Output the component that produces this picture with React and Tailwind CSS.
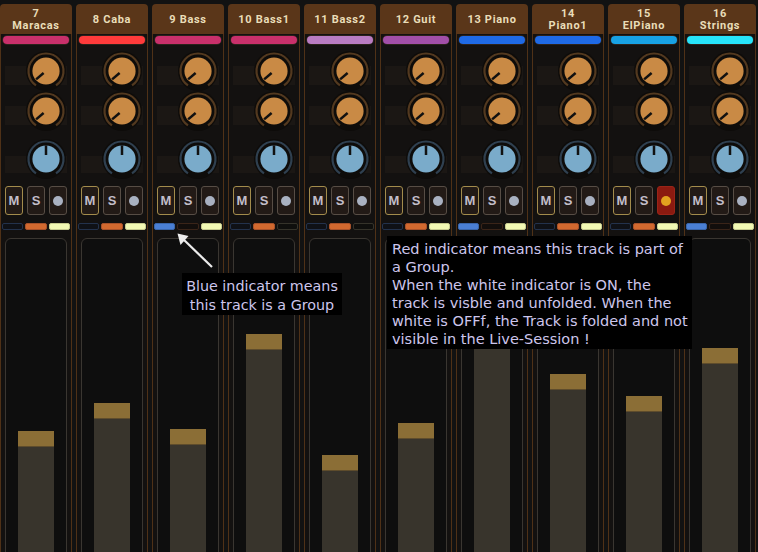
import React from "react";

const strips = [
  { n: "7", name: "Maracas", color: "#c9306b", ind: [0, 1, 1], cap: 431 },
  { n: "8", name: "Caba", color: "#ff3b3b", ind: [0, 1, 1], cap: 403, one: true },
  { n: "9", name: "Bass", color: "#c9306b", ind: [1, 0, 1], cap: 429, one: true },
  { n: "10", name: "Bass1", color: "#c9306b", ind: [0, 1, 0], cap: 334, one: true },
  { n: "11", name: "Bass2", color: "#b97cc2", ind: [0, 1, 0], cap: 455, one: true },
  { n: "12", name: "Guit", color: "#a24fa8", ind: [0, 1, 1], cap: 423, one: true },
  { n: "13", name: "Piano", color: "#1f6ae6", ind: [1, 0, 1], cap: 330, one: true },
  { n: "14", name: "Piano1", color: "#1f6ae6", ind: [0, 1, 1], cap: 374 },
  { n: "15", name: "ElPiano", color: "#18a2e4", ind: [0, 1, 1], cap: 396, rec: true },
  { n: "16", name: "Strings", color: "#27e4fa", ind: [1, 0, 1], cap: 348 },
];

function Knob({ blue }) {
  const fill = blue ? "#7aabca" : "#c98a45";
  const ring = blue ? "#2f4050" : "#53391f";
  return (
    <svg width="40" height="40" viewBox="0 0 40 40" className="col-start-1 row-start-1 justify-self-start ml-[25px] self-start">
      <circle cx="20" cy="20" r="20" fill="#0e0c0a" />
      <path d="M 9.96 34.33 A 17.5 17.5 0 1 1 30.04 34.33" fill="none" stroke={ring} strokeWidth="2.2" />
      <circle cx="20" cy="20" r="13.6" fill={fill} />
      {blue ? (
        <line x1="20" y1="6.4" x2="20" y2="16" stroke="#111" strokeWidth="2.5" />
      ) : (
        <line x1="17.6" y1="22" x2="10.1" y2="28.4" stroke="#111" strokeWidth="2.5" />
      )}
    </svg>
  );
}

function KnobRow({ blue, rectTop, rectH, className }) {
  return (
    <div className={"grid h-[40px] " + className}>
      <div
        className="col-start-1 row-start-1 self-start mx-[4px] bg-[#1b1714]"
        style={{ marginTop: rectTop, height: rectH }}
      />
      <Knob blue={blue} />
    </div>
  );
}

function Strip({ s }) {
  const [b, o, w] = s.ind;
  return (
    <div className="flex flex-col w-[72px] h-[560px] shrink-0">
      <div className="h-[30px] rounded-t-[4px] bg-[#5a3619] flex flex-col items-center justify-center pt-[1px] text-[#e9ddb8] font-bold text-[11px] leading-[11.5px] tracking-[0.7px] font-['Roboto',sans-serif]">
        {s.one ? (
          <span>{s.n + " " + s.name}</span>
        ) : (
          <>
            <span>{s.n}</span>
            <span>{s.name}</span>
          </>
        )}
      </div>
      <div className="flex-1 flex flex-col border-x border-[#4f3117] bg-[#131110]">
        <div className="pt-[1px] px-[1px]">
          <div className="h-[10px] rounded-full border border-[#2c221b] flex">
            <div className="flex-1 rounded-full" style={{ background: s.color }} />
          </div>
        </div>
        <KnobRow className="mt-[6px]" rectTop={15} rectH={19} />
        <KnobRow className="mt-0" rectTop={15} rectH={19} />
        <KnobRow blue className="mt-[8px]" rectTop={17} rectH={17} />
        <div className="mt-[7px] flex gap-[4px] px-[4px] font-['Liberation_Sans',sans-serif]">
          <div className="w-[18px] h-[29px] rounded-[3px] border border-[#a38c4c] bg-[#221a16] flex items-center justify-center text-[#c2bec9] font-bold text-[13px]">M</div>
          <div className="w-[18px] h-[29px] rounded-[3px] border border-[#574d45] bg-[#221a16] flex items-center justify-center text-[#c2bec9] font-bold text-[13px]">S</div>
          {s.rec ? (
            <div className="w-[18px] h-[29px] rounded-[3px] border border-[#9a2418] bg-[#8b1a10] flex items-center justify-center">
              <div className="w-[10px] h-[10px] rounded-full bg-[#e3a21f]" />
            </div>
          ) : (
            <div className="w-[18px] h-[29px] rounded-[3px] border border-[#574d45] bg-[#221a16] flex items-center justify-center">
              <div className="w-[10px] h-[10px] rounded-full bg-[#a9b1c1]" />
            </div>
          )}
        </div>
        <div className="mt-[8px] flex gap-[2px] px-[1px] h-[7px]">
          <div className={"flex-1 rounded-[2px] border " + (b ? "bg-[#4a7fd4] border-[#3a66aa]" : "bg-[#0f1116] border-[#23324c]")} />
          <div className={"flex-1 rounded-[2px] border " + (o ? "bg-[#d2692f] border-[#a8522a]" : "bg-[#120e0c] border-[#3a2418]")} />
          <div className={"flex-1 rounded-[2px] border " + (w ? "bg-[#f2f9b4] border-[#c8cc90]" : "bg-[#0f0f0d] border-[#35332a]")} />
        </div>
        <div className="mt-[8px] mx-[4px] flex-1 rounded-t-[6px] border border-[#3a3631] bg-[#0e0e0e] flex flex-col justify-end items-center">
          <div className="w-[36px] flex flex-col" style={{ height: 563 - s.cap }}>
            <div className="h-[16px] bg-[#8b6e36] border-b border-[#5e4c2c]" />
            <div className="flex-1 bg-[#38342c]" />
          </div>
        </div>
      </div>
    </div>
  );
}

export default function App() {
  return (
    <div className="relative w-[758px] h-[552px] overflow-hidden bg-[#121212]">
      <div className="flex gap-[4px] pt-[4px]">
        {strips.map((s) => (
          <Strip key={s.n} s={s} />
        ))}
      </div>
      <svg className="absolute left-[170px] top-[228px]" width="50" height="44" viewBox="170 228 50 44">
        <line x1="182" y1="238" x2="212" y2="267" stroke="#ececec" strokeWidth="2.2" />
        <polygon points="177.5,233.5 188.5,236 180.5,245" fill="#ececec" />
      </svg>
      <div className="absolute left-[182px] top-[273px] w-[160px] h-[42px] bg-black pt-[4px] text-center text-[14.3px] leading-[19px] text-[#cdc6ec] font-['DejaVu_Sans',sans-serif] whitespace-nowrap">
        Blue indicator means
        <br />
        this track is a Group
      </div>
      <div className="absolute left-[387px] top-[236px] w-[305px] h-[113px] bg-black pt-[4px] pl-[5px] text-[14.5px] leading-[18px] text-[#cdc6ec] font-['DejaVu_Sans',sans-serif] whitespace-nowrap">
        Red indicator means this track is part of
        <br />
        a Group.
        <br />
        When the white indicator is ON, the
        <br />
        track is visble and unfolded. When the
        <br />
        white is OFFf, the Track is folded and not
        <br />
        visible in the Live-Session !
      </div>
    </div>
  );
}
